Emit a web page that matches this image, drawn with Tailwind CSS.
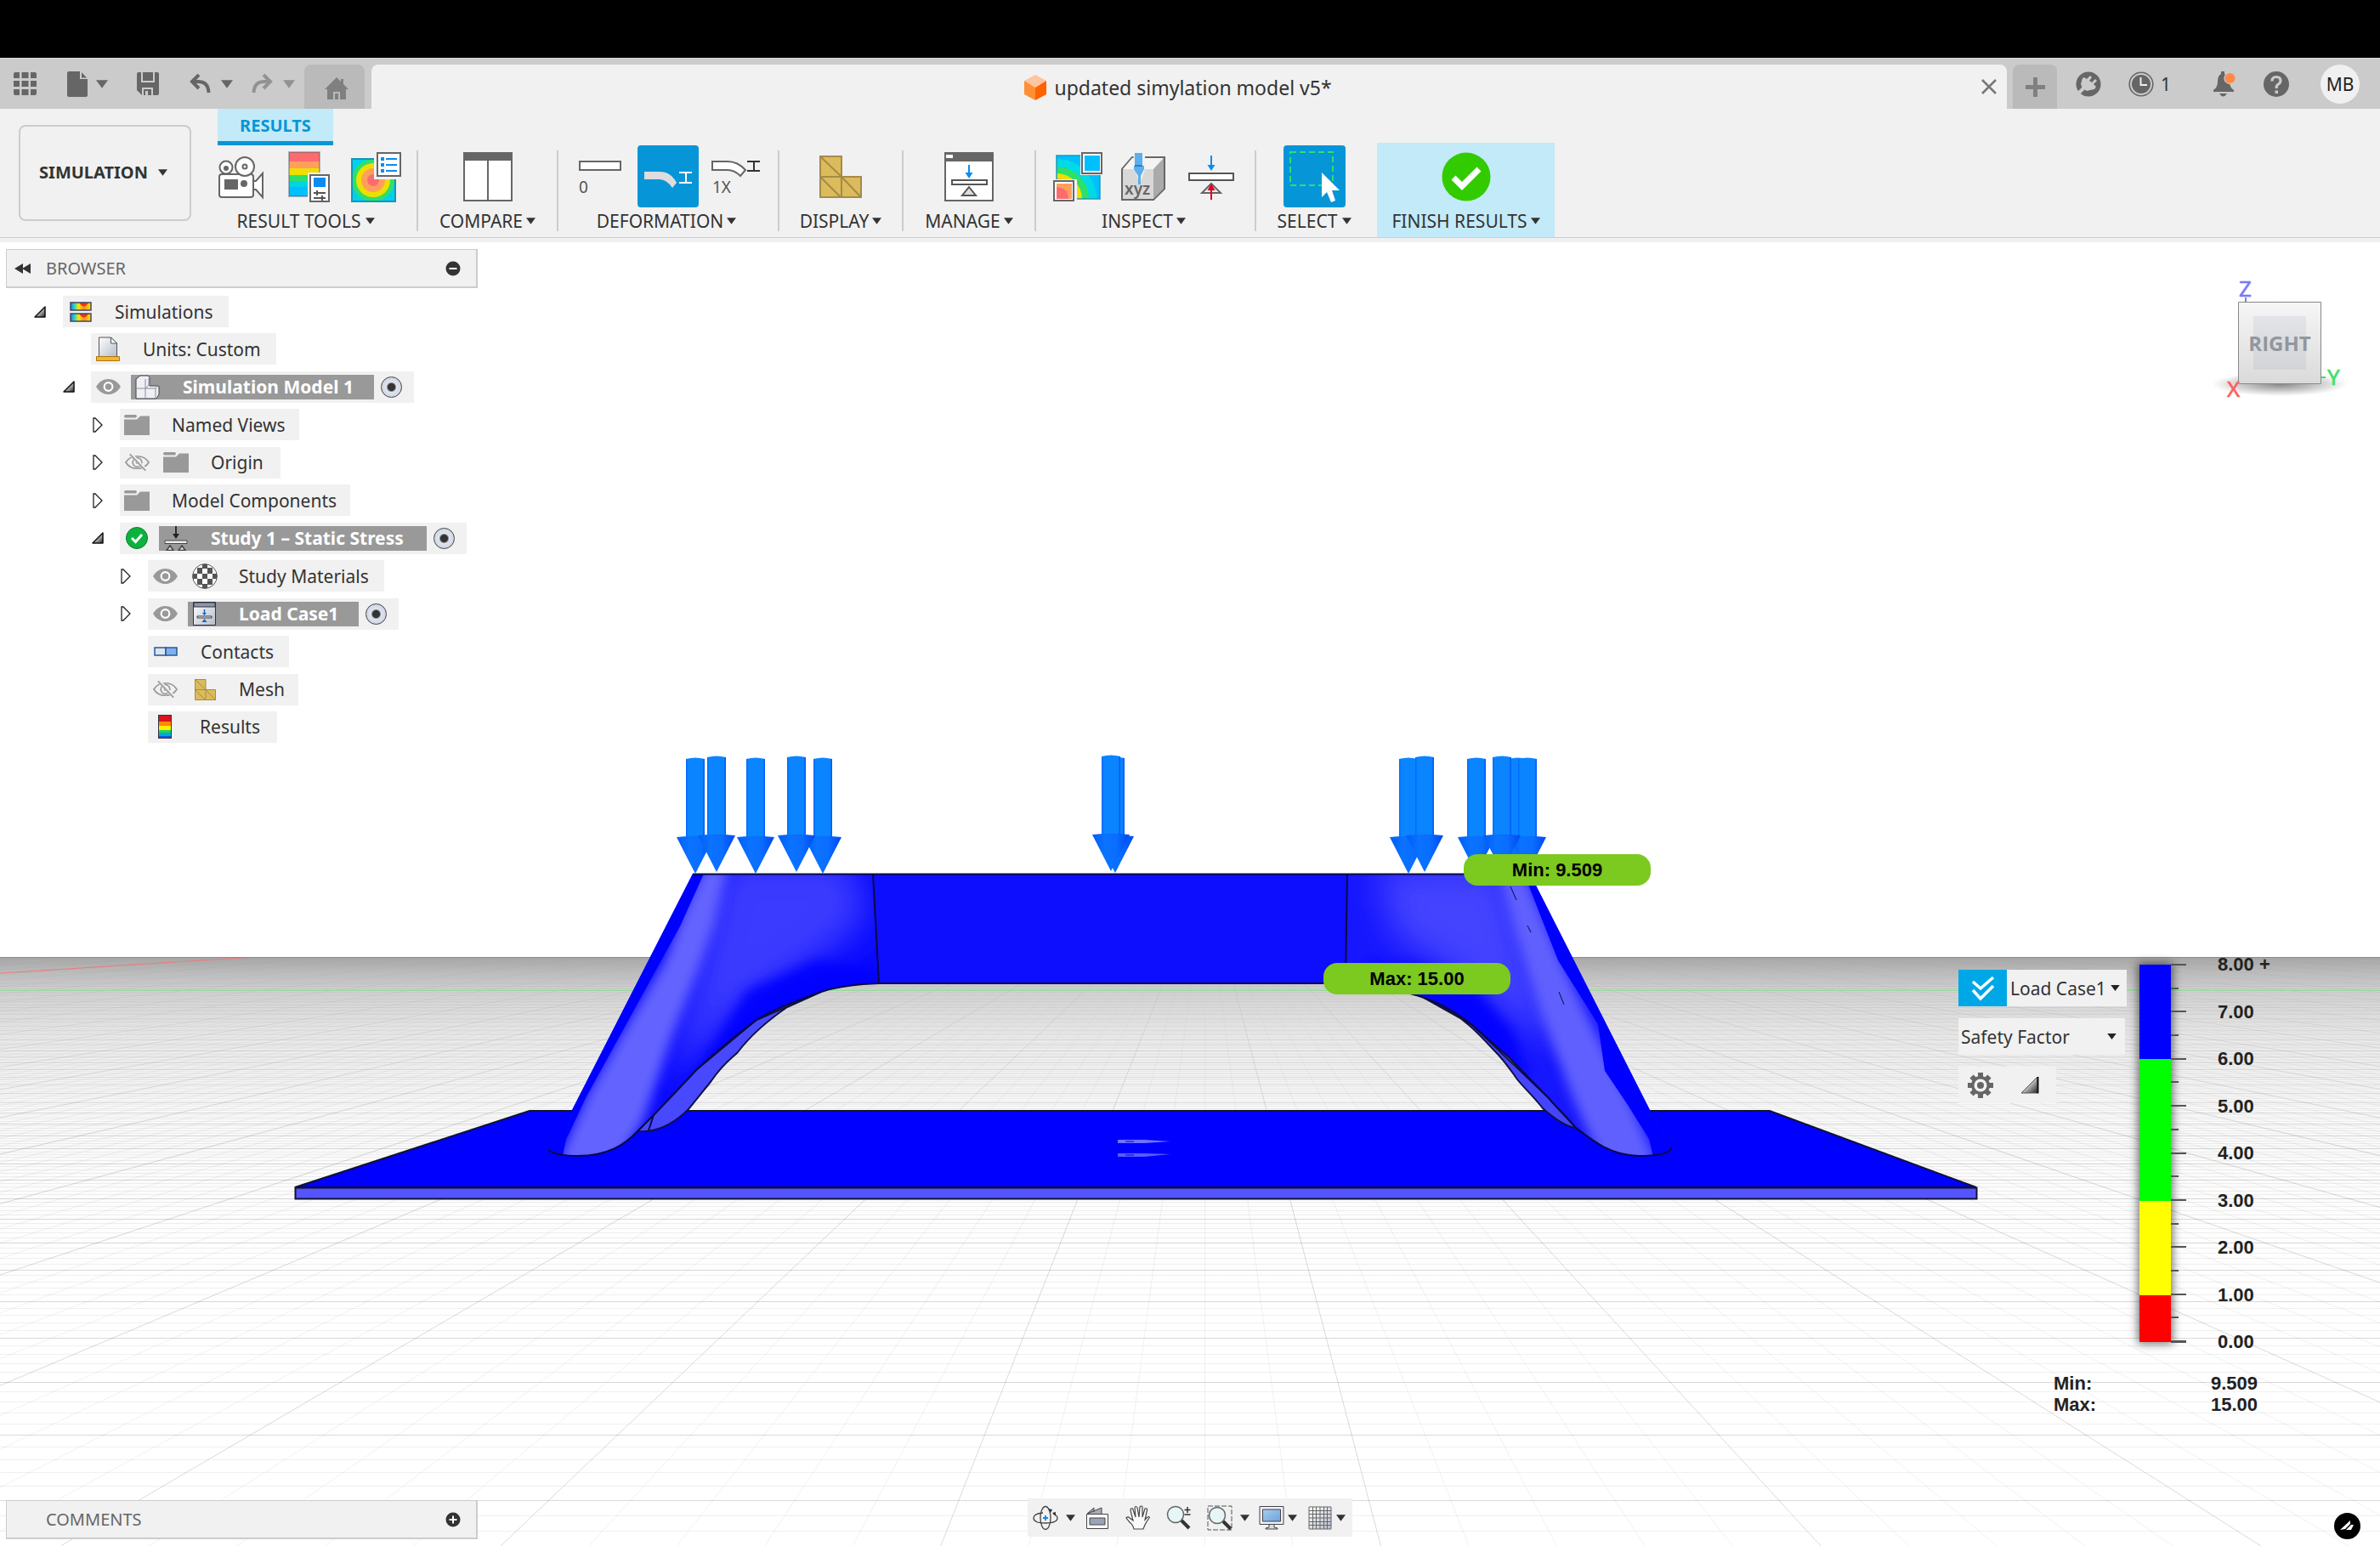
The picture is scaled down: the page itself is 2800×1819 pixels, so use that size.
<!DOCTYPE html>
<html lang="en">
<head>
<meta charset="utf-8">
<title>updated simylation model v5*</title>
<script src="https://cdn.jsdelivr.net/npm/@tailwindcss/browser@4"></script>
</head>
<body class="bg-white">
<svg class="absolute h-0 w-0" aria-hidden="true">
  <defs>
    <linearGradient id="tri" x1="0" y1="0" x2="1" y2="1"><stop offset=".3" stop-color="#fff"/><stop offset="1" stop-color="#222"/></linearGradient>
    <linearGradient id="paper" x1="0" y1="0" x2="1" y2="1"><stop offset="0" stop-color="#fff"/><stop offset="1" stop-color="#b4bccb"/></linearGradient>
    <linearGradient id="heat" x1="0" x2="1"><stop offset="0" stop-color="#1e7be0"/><stop offset=".2" stop-color="#2fd6c8"/><stop offset=".4" stop-color="#ffe600"/><stop offset=".65" stop-color="#f5901e"/><stop offset="1" stop-color="#ffe600"/></linearGradient>
    <linearGradient id="screen" x1="0" y1="0" x2="1" y2="1"><stop offset="0" stop-color="#a8cbee"/><stop offset="1" stop-color="#6ea3dc"/></linearGradient>
  </defs>
  <symbol id="caret" viewBox="0 0 12 8"><path d="M0 0h12L6 8z" fill="currentColor"/></symbol>
  <symbol id="open" viewBox="0 0 14 14"><path d="M13 1v12H1z" fill="url(#tri)" stroke="#111" stroke-width="1.5" stroke-linejoin="round"/></symbol>
  <symbol id="closed" viewBox="0 0 12 18"><path d="M1 1h2l8 8-8 8H1z" fill="#fff" stroke="#222" stroke-width="1.3"/></symbol>
  <symbol id="eye" viewBox="0 0 30 20"><path d="M0 10C7-2.500 23-2.500 30 10 23 22.500 7 22.500 0 10z" fill="#999"/><circle cx="15" cy="10" r="5" fill="#999" stroke="#fff" stroke-width="2.200"/></symbol>
  <symbol id="eyeoff" viewBox="0 0 30 22"><path d="M1 11C7 1 23 1 29 11 23 21 7 21 1 11z" fill="none" stroke="#999" stroke-width="1.800"/><circle cx="15" cy="11" r="5.500" fill="none" stroke="#999" stroke-width="1.800"/><circle cx="15" cy="11" r="2" fill="#999"/><path d="M8 2l17 18" stroke="#f0f0f0" stroke-width="4"/><path d="M6 1l19 20" stroke="#999" stroke-width="1.800"/></symbol>
  <symbol id="folder" viewBox="0 0 30 24"><path d="M2 0h11q2 0 2 2l-1 1.500H2Q0 3.500 0 2 0 0 2 0z" fill="#999"/><path d="M0 5.500h15L19 1.500h11V24H0z" fill="#999"/></symbol>
  <symbol id="mesh" viewBox="0 0 50 50"><path d="M1 1h25v24h23v24H1z" fill="#dcbb5c" stroke="#a68b47" stroke-width="2"/><path d="M1 25h25v24M1 25l24 24M26 25l23 24M1 1l25 24" fill="none" stroke="#a68b47" stroke-width="2"/></symbol>
</svg>

<div class="flex min-h-screen flex-col font-['Noto_Sans',sans-serif] text-[21px] leading-[28px] text-[#333]">
  <div class="h-[68px] shrink-0 bg-black"></div>

  <header class="flex h-[60px] shrink-0 items-end border-t border-[#ddd] bg-[#cbcbcb] text-[#666]">
    <div class="flex h-full w-[358px] items-center pl-4">
      <button aria-label="Data panel" class="mr-9"><svg class="h-[27px] w-[27px]" viewBox="0 0 27 27" fill="currentColor"><path d="M2 0h5v7H0V2Q0 0 2 0zM9.500 0h8v7h-8zM20 0h5q2 0 2 2v5h-7zM0 10h7v7H0zM9.500 10h8v7h-8zM20 10h7v7h-7zM0 20h7v7H2q-2 0-2-2zM9.500 20h8v7h-8zM20 20h7v5q0 2-2 2h-5z"/></svg></button>
      <button aria-label="File" class="mr-[34px] flex items-center gap-[10px]"><svg class="h-[30px] w-6" viewBox="0 0 24 30" fill="currentColor"><path d="M2 0h13v9h9v19q0 2-2 2H2q-2 0-2-2V2Q0 0 2 0z"/><path d="M17 1l6 6.500h-6z"/></svg><svg class="h-[10px] w-[14px]"><use href="#caret"/></svg></button>
      <button aria-label="Save" class="mr-9"><svg class="h-[27px] w-[26px]" viewBox="0 0 26 27"><path d="M2 0h22q2 0 2 2v23q0 2-2 2H6L0 21V2Q0 0 2 0z" fill="currentColor"/><path d="M6 0v11h14V0M7 27v-8h11v8" fill="none" stroke="#cbcbcb" stroke-width="2"/><path d="M10 22h3v5h-3z" fill="#cbcbcb"/></svg></button>
      <button aria-label="Undo" class="mr-[22px] flex items-center gap-3"><svg class="h-[23px] w-[25px]" viewBox="0 0 25 23" fill="none" stroke="currentColor" stroke-width="4"><path d="M11 1L3 9l8 8M3 9h7q12 0 12.500 13"/></svg><svg class="h-[10px] w-[14px]"><use href="#caret"/></svg></button>
      <button aria-label="Redo" class="flex items-center gap-3 text-[#929292]"><svg class="h-[23px] w-[25px]" viewBox="0 0 25 23" fill="none" stroke="currentColor" stroke-width="4"><path d="M14 1l8 8-8 8M22 9h-7Q3 9 2.500 22"/></svg><svg class="h-[10px] w-[14px]"><use href="#caret"/></svg></button>
    </div>
    <button aria-label="Home" class="mr-2 flex h-[52px] w-[71px] items-center justify-center rounded-t-lg bg-[#bababa] pt-1 pl-1"><svg class="h-[26px] w-7" viewBox="0 0 28 26" fill="#808080"><path d="M14 0l5 5V2h3v6l6 6h-3v12h-7v-9h-8v9H3V14H0z"/><path d="M12 19h4v7h-4z"/></svg></button>
    <div class="flex h-[52px] flex-1 items-center rounded-t-lg bg-[#f1f1f1]">
      <div class="flex flex-1 items-center justify-center gap-[9px] pt-[2px] pr-16 pl-[68px] text-[23px] text-[#333]">
        <svg class="h-[30px] w-[26px]" viewBox="0 0 26 30"><path d="M13 0l13 7-13 8L0 7z" fill="#ffc4a0"/><path d="M0 7l13 8v15L0 23z" fill="#ff8f33"/><path d="M26 7l-13 8v15l13-7z" fill="#ff6200"/></svg>
        <h1>updated simylation model v5*</h1>
      </div>
      <button aria-label="Close document" class="mr-3"><svg class="h-[18px] w-[18px]" viewBox="0 0 18 18" stroke="#777" stroke-width="2.500"><path d="M1 1l16 16M17 1L1 17"/></svg></button>
    </div>
    <button aria-label="New document" class="ml-[7px] flex h-[52px] w-[52px] items-center justify-center rounded-t-lg bg-[#bababa]"><svg class="h-[23px] w-[23px]" viewBox="0 0 23 23" fill="#808080"><path d="M9 0h5v9h9v5h-9v9H9v-9H0V9h9z"/></svg></button>
    <div class="flex h-full w-[380px] items-center pl-[22px]">
      <button aria-label="Extensions" class="mr-8"><svg class="h-[30px] w-[30px]" viewBox="0 0 30 30"><circle cx="15" cy="15" r="14.500" fill="currentColor"/><path d="M3 26l8-8" stroke="#cbcbcb" stroke-width="4"/><path d="M8 8l2-1 3 2 4-4 2 2-3 4 3 2 4-4 2 2-4 4 3 3-2 3-5 1-4 1-5-3-2-5z" fill="#cbcbcb"/></svg></button>
      <button aria-label="Job status" class="mr-[49px] flex items-center gap-2"><svg class="h-[30px] w-[30px]" viewBox="0 0 30 30"><circle cx="15" cy="15" r="13.800" fill="none" stroke="currentColor" stroke-width="1.600"/><circle cx="15" cy="15" r="11" fill="currentColor"/><path d="M14.500 7v9H22" fill="none" stroke="#eee" stroke-width="2"/></svg><span class="text-[21px] text-[#333]">1</span></button>
      <button aria-label="Notifications" class="mr-[33px]"><svg class="h-[30px] w-[27px]" viewBox="0 0 27 30"><path d="M10 0h4v3q6 2 6 9 0 7 5 10v2H1v-2q5-3 5-10 0-7 4-9z" fill="currentColor"/><path d="M8 26h9q-4.500 7-9 0z" fill="currentColor"/><circle cx="20.500" cy="8" r="7.200" fill="#cbcbcb"/><circle cx="20.500" cy="8" r="6" fill="#ff8a45"/></svg></button>
      <button aria-label="Help" class="mr-[37px]"><svg class="h-[30px] w-[30px]" viewBox="0 0 30 30"><circle cx="15" cy="15" r="15" fill="currentColor"/><path d="M10 11.500q0-5 5-5t5 4.500q0 2.500-2.500 4T15.200 19v1" fill="none" stroke="#cbcbcb" stroke-width="3.200"/><path d="M13.500 22.500h3.500V26h-3.500z" fill="#cbcbcb"/></svg></button>
      <button class="h-[46px] w-[46px] rounded-full bg-[#f0f0f0] text-[21px] text-[#222]">MB</button>
    </div>
  </header>

  <section class="flex h-[157px] shrink-0 flex-col bg-[#f1f1f1]">
    <div class="flex h-[151px]">
      <button class="mt-[19px] ml-[22px] flex h-[113px] w-[203px] items-center justify-center gap-3 rounded-lg border-2 border-[#ccc] pr-1 pb-[2px] text-[20px] font-bold">SIMULATION<svg class="h-2 w-[11px]"><use href="#caret"/></svg></button>
      <div class="ml-[11px] flex flex-col">
        <nav class="flex h-[43px] pl-5"><a href="#results" class="flex w-[136px] items-center justify-center border-b-[5px] border-[#0696d7] bg-[#c3eaf8] pt-[2px] text-[20px] font-bold text-[#0696d7]">RESULTS</a></nav>
        <div class="flex h-[108px] text-[21px]">
          <div class="flex w-[254px] flex-col items-center">
            <div class="flex h-[73px] w-[240px] items-center justify-around">
              <svg class="h-[60px] w-[60px]" viewBox="0 0 60 60" fill="#fff" stroke="#666" stroke-width="2"><path d="M45 35h3l8-9v28l-8-9h-3"/><rect x="5" y="27" width="40" height="27" rx="3"/><circle cx="13" cy="19" r="7.500"/><circle cx="35" cy="18" r="11"/><circle cx="13" cy="20" r="2" fill="#666"/><circle cx="35" cy="18" r="2.500" fill="none"/><path d="M12 34h14v10H12z" fill="#666"/><circle cx="34" cy="38" r="3" fill="#666"/></svg>
              <svg class="h-[60px] w-[60px]" viewBox="0 0 60 60"><path fill="#fd6b6e" d="M7 1h36v12H7z"/><path fill="#ff9f5c" d="M7 12h36v8H7z"/><path fill="#eddf00" d="M7 20h36v8H7z"/><path fill="#2de06a" d="M7 28h36v8H7z"/><path fill="#00d4e6" d="M7 35h36v8H7z"/><path fill="#00bfff" d="M7 42h36v11H7z"/><path d="M7 1h36v52H7z" fill="none" stroke="#456" stroke-opacity=".4" stroke-width="2"/><path d="M29 25h26v36H29z" fill="#f1f1f1"/><path d="M32 28h22v31H32z" fill="#fff" stroke="#666" stroke-width="2"/><path d="M36 31h14v11H36z" fill="#0a8cf0"/><path d="M36 49h14M36 55h14M40 46v6M46 52v6" stroke="#555" stroke-width="2"/></svg>
              <svg class="h-[60px] w-[60px]" viewBox="0 0 60 60"><path fill="#00d0f0" d="M1 9h51v50H1z"/><clipPath id="cp1"><path d="M1 9h51v50H1z"/></clipPath><g clip-path="url(#cp1)"><circle cx="26" cy="34" r="25" fill="#2de06a"/><circle cx="26" cy="34" r="20" fill="#eddf00"/><circle cx="26" cy="34" r="14" fill="#ff9f5c"/><circle cx="26" cy="34" r="7" fill="#fd6b6e"/></g><path d="M1 9h51v50H1z" fill="none" stroke="#1596b5" stroke-width="2"/><path d="M27 0h33v33H27z" fill="#f1f1f1"/><path d="M31 2h27v27H31z" fill="#fff" stroke="#666" stroke-width="2"/><path d="M35 7h4v4h-4zM35 14h4v4h-4zM35 21h4v4h-4zM41 8h13v2H41zM41 15h13v2H41zM41 22h13v2H41z" fill="#0a8cf0"/></svg>
            </div>
            <button class="flex h-8 items-center gap-[6px] pr-[6px]">RESULT TOOLS<svg class="h-2 w-[11px]"><use href="#caret"/></svg></button>
          </div>
          <div class="mt-[6px] h-[95px] w-[2px] bg-[#ccc]"></div>
          <div class="flex w-[163px] flex-col items-center">
            <div class="flex h-[73px] items-center"><svg class="h-[58px] w-[58px]" viewBox="0 0 58 58"><path d="M1 1h56v56H1z" fill="#fff" stroke="#666" stroke-width="2"/><path d="M0 0h58v10H0z" fill="#666"/><path d="M29 9v48" stroke="#666" stroke-width="2"/></svg></div>
            <button class="flex h-8 items-center gap-1">COMPARE<svg class="h-2 w-[11px]"><use href="#caret"/></svg></button>
          </div>
          <div class="mt-[6px] h-[95px] w-[2px] bg-[#ccc]"></div>
          <div class="flex w-[258px] flex-col items-center">
            <div class="flex h-[73px] items-center gap-2">
              <svg class="h-[60px] w-[72px]" viewBox="0 0 72 60"><path d="M12 12h48v10H12z" fill="#fff" stroke="#666" stroke-width="2"/><text x="11" y="49" font-family="Noto Sans" font-size="19" fill="#555">0</text></svg>
              <div class="flex h-[73px] w-[72px] items-center rounded-sm bg-[#0696d7]"><svg class="h-[60px] w-[72px]" viewBox="0 0 72 60"><path d="M8 24h18q13 0 20 13l-5 6Q34 33 26 33H8z" fill="#ddd"/><path d="M49 25h15M49 37h15M57 25v12" stroke="#fff" stroke-width="2"/></svg></div>
              <svg class="h-[60px] w-[72px]" viewBox="0 0 72 60"><path d="M8 12h18q12 0 21 10l-6 7Q34 22 26 22H8z" fill="#fff" stroke="#666" stroke-width="2"/><path d="M49 12h15M49 23h15M57 12v11" stroke="#333" stroke-width="2"/><text x="8" y="49" font-family="Noto Sans" font-size="19" fill="#555">1X</text></svg>
            </div>
            <button class="flex h-8 items-center gap-1 pr-1">DEFORMATION<svg class="h-2 w-[11px]"><use href="#caret"/></svg></button>
          </div>
          <div class="mt-[6px] h-[95px] w-[2px] bg-[#ccc]"></div>
          <div class="flex w-[144px] flex-col items-center">
            <div class="flex h-[73px] items-center"><svg class="h-[50px] w-[50px]"><use href="#mesh"/></svg></div>
            <button class="flex h-8 items-center gap-1">DISPLAY<svg class="h-2 w-[11px]"><use href="#caret"/></svg></button>
          </div>
          <div class="mt-[6px] h-[95px] w-[2px] bg-[#ccc]"></div>
          <div class="flex w-[154px] flex-col items-center">
            <div class="flex h-[73px] items-center"><svg class="h-[58px] w-[58px]" viewBox="0 0 58 58"><path d="M1 1h56v56H1z" fill="#fff" stroke="#666" stroke-width="2"/><path d="M0 0h58v11H0z" fill="#666"/><path d="M2 3h8v4H2z" fill="#fff"/><path d="M29 15v12" stroke="#0a8cf0" stroke-width="2"/><path d="M24.500 24h9L29 31z" fill="#0a8cf0"/><path d="M9 33h41v5H9z" fill="#fff" stroke="#555" stroke-width="2"/><path d="M29 41l8 10H21z" fill="#ddd" stroke="#555" stroke-width="2"/></svg></div>
            <button class="flex h-8 items-center gap-1">MANAGE<svg class="h-2 w-[11px]"><use href="#caret"/></svg></button>
          </div>
          <div class="mt-[6px] h-[95px] w-[2px] bg-[#ccc]"></div>
          <div class="flex w-[257px] flex-col items-center pr-1">
            <div class="flex h-[73px] items-center gap-[18px]">
              <svg class="h-[60px] w-[60px]" viewBox="0 0 60 60"><clipPath id="cp2"><path d="M5 5h51v51H5z"/></clipPath><g clip-path="url(#cp2)"><path fill="#00bfff" d="M5 5h51v51H5z"/><circle cx="5" cy="56" r="47" fill="#00d9e6"/><circle cx="5" cy="56" r="38" fill="#2de06a"/><circle cx="5" cy="56" r="30" fill="#eddf00"/><circle cx="5" cy="56" r="24" fill="#ff9f5c"/></g><path d="M5 5h51v51H5z" fill="none" stroke="#1596b5" stroke-opacity=".7" stroke-width="2"/><path d="M33 0h27v28H33zM0 33h29v27H0z" fill="#f1f1f1"/><path d="M35 2h23v24H35zM2 35h23v23H2z" fill="#fff" stroke="#666" stroke-width="2"/><path d="M38 5h18v18H38z" fill="#00bfff"/><path d="M5 38h18v18H5z" fill="#ff9f5c"/><path d="M5 42q14 1 14 14H5z" fill="#fd6b6e"/></svg>
              <svg class="h-[60px] w-[60px]" viewBox="0 0 60 60"><path d="M4 21L16 7h38v37L41 57H4z" fill="#d8d8d8" stroke="#666" stroke-width="2"/><path d="M5 21L16 8h37L41 21z" fill="#f4f4f4"/><path d="M53 8v36L41 56V21z" fill="#aaa"/><path d="M17 1h14v20l-6 18-6-18z" fill="#f1f1f1"/><path d="M19 2h9v15h2v4l-4 8v10h-3V29l-5-8v-4h1z" fill="#5aafec"/><path d="M19 17h9" stroke="#2b7fc2" stroke-width="2"/><text x="7" y="51" font-family="Noto Sans" font-size="19" font-weight="600" fill="#666">xyz</text></svg>
              <svg class="h-[60px] w-[60px]" viewBox="0 0 60 60"><path d="M31 5v12" stroke="#0a8cf0" stroke-width="2"/><path d="M26.500 16h9L31 23z" fill="#0a8cf0"/><path d="M5 26h52v8H5z" fill="#fff" stroke="#555" stroke-width="2"/><path d="M31 38l11 11H20z" fill="#eee" stroke="#666" stroke-width="2"/><path d="M31 57V44" stroke="#e00020" stroke-width="2"/><path d="M26.500 46h9L31 38z" fill="#e00020"/></svg>
            </div>
            <button class="flex h-8 items-center gap-1">INSPECT<svg class="h-2 w-[11px]"><use href="#caret"/></svg></button>
          </div>
          <div class="mt-[6px] h-[95px] w-[2px] bg-[#ccc]"></div>
          <div class="flex w-[137px] flex-col items-center">
            <div class="flex h-[73px] w-[73px] rounded-sm bg-[#0696d7]"><svg viewBox="0 0 73 73"><path d="M8 8h50v39H8z" fill="none" stroke="#2de06a" stroke-width="2" stroke-dasharray="7 4"/><path d="M45 32v29l6-6 5 12 5-2-4-12h9z" fill="#fff"/></svg></div>
            <button class="flex h-8 items-center gap-[6px]">SELECT<svg class="h-2 w-[11px]"><use href="#caret"/></svg></button>
          </div>
          <div class="mt-[-3px] ml-[5px] flex w-[209px] flex-col items-center bg-[#c3eaf8] pt-[3px]">
            <div class="flex h-[73px] items-center"><svg class="h-[58px] w-[58px]" viewBox="0 0 58 58"><circle cx="29" cy="29" r="28.500" fill="#32cb00"/><path d="M14 30l10 10 20-20" fill="none" stroke="#fff" stroke-width="7"/></svg></div>
            <button class="flex h-8 items-center gap-1">FINISH RESULTS<svg class="h-2 w-[11px]"><use href="#caret"/></svg></button>
          </div>
        </div>
      </div>
    </div>
    <div class="h-[6px] border-t border-[#ccc]"></div>
  </section>

  <main class="relative flex min-h-[1534px] flex-1 flex-col overflow-hidden">
    <svg class="absolute inset-0 h-full w-full" viewBox="0 285 2800 1534" preserveAspectRatio="xMidYMin slice">
      <defs>
        <linearGradient id="ground" gradientUnits="userSpaceOnUse" x1="0" y1="1126" x2="0" y2="1560">
          <stop offset="0" stop-color="#b0b0b0"/><stop offset=".05" stop-color="#cacaca"/><stop offset=".1" stop-color="#dadada"/><stop offset=".2" stop-color="#ececec"/><stop offset=".4" stop-color="#f8f8f8"/><stop offset=".7" stop-color="#fdfdfd"/><stop offset="1" stop-color="#fff"/>
        </linearGradient>
        <linearGradient id="fade" gradientUnits="userSpaceOnUse" x1="0" y1="1126" x2="0" y2="1350"><stop offset="0" stop-color="#333"/><stop offset="1" stop-color="#fff"/></linearGradient>
        <mask id="far" maskUnits="userSpaceOnUse" x="0" y="1100" width="2800" height="720"><path d="M0 1126h2800v700H0z" fill="url(#fade)"/></mask>
        <clipPath id="below"><path d="M0 1126h2800v700H0z"/></clipPath>
        <linearGradient id="shaft" x1="0" x2="1"><stop offset="0" stop-color="#0066ff"/><stop offset=".12" stop-color="#0a85ff"/><stop offset=".88" stop-color="#0a85ff"/><stop offset="1" stop-color="#0050ff"/></linearGradient>
        <linearGradient id="head" x1="0" x2="1"><stop offset="0" stop-color="#005cf8"/><stop offset=".35" stop-color="#0a73ff"/><stop offset=".65" stop-color="#0a6dff"/><stop offset="1" stop-color="#0048f0"/></linearGradient>
        <filter id="soft" x="-30%" y="-30%" width="160%" height="160%"><feGaussianBlur stdDeviation="7"/></filter>
        <filter id="softer" x="-30%" y="-30%" width="160%" height="160%"><feGaussianBlur stdDeviation="20"/></filter>
        <clipPath id="legL"><path d="M815 1028H1027L1034 1157C1004 1158 985 1161 966 1167C936 1178 912 1187 890 1200C860 1222 840 1240 819 1259C800 1280 786 1294 769 1312L750 1331C735 1347 715 1360 680 1360H662L673 1306z"/></clipPath>
        <clipPath id="legR"><path d="M1585 1028H1800L1941 1306L1966 1350C1967 1357 1950 1360 1927 1360C1895 1359 1876 1344 1854 1327C1845 1316 1833 1305 1822 1292L1776 1245L1732 1206C1710 1189 1690 1177 1659 1169C1635 1160 1610 1157 1583 1157z"/></clipPath>
        <g id="arrow"><path d="M-11 2q11-3 22 0v95h-22z" fill="url(#shaft)"/><path d="M-22 94q22-3 44 0L0 137z" fill="url(#head)"/></g>
        <radialGradient id="cubeshadow"><stop offset="0" stop-color="#888"/><stop offset="1" stop-color="#888" stop-opacity="0"/></radialGradient>
        <linearGradient id="cubeface" x1="0" y1="0" x2="0" y2="1"><stop offset="0" stop-color="#f6f6f6"/><stop offset="1" stop-color="#dadada"/></linearGradient>
        <linearGradient id="cubemid" x1="0" y1="0" x2="0" y2="1"><stop offset="0" stop-color="#e2e4e8"/><stop offset="1" stop-color="#d2d4d7"/></linearGradient>
      </defs>
      <path d="M0 1126h2800v693H0z" fill="url(#ground)"/>
      <g clip-path="url(#below)" fill="none" stroke="#000">
        <g mask="url(#far)"><path id="minor" stroke-opacity=".06"/><path id="major" stroke-opacity=".15"/></g>
        <path d="M0 1145L300 1126" stroke="#f07878"/>
        <path d="M0 1165.500H2800" stroke="#8fdc98"/>
        <path d="M0 1126.500H2800" stroke="#888"/>
      </g>
      <!-- base plate -->
      <path d="M623 1307H2082L2325 1397H347z" fill="#00f" stroke="#111133" stroke-width="2"/>
      <path d="M347.500 1397.500h1978V1410.500h-1978z" fill="#5555ff" stroke="#111133" stroke-width="2"/>
      <g fill="#7272ff"><path d="M1315 1341h31l31 2-31 2h-31z"/><path d="M1315 1357h31l31 1-31 3h-31z" opacity=".8"/></g>
      <path d="M1324 1343h10M1324 1359h10" stroke="#00f"/>
      <!-- span -->
      <path d="M1027 1028H1586L1583 1157H1034z" fill="#0e0eff"/>
      <!-- inner faces of the legs -->
      <path d="M750 1331C775 1333 795 1320 810 1305C825 1287 830 1280 836 1273C850 1252 860 1246 868 1238C880 1222 900 1203 926 1185L966 1167L890 1200L819 1259z" fill="#4848ff" stroke="#111144" stroke-width="2"/>
      <path d="M1854 1327C1840 1325 1826 1314 1815 1304C1805 1291 1793 1280 1785 1270C1770 1248 1762 1240 1757 1235C1745 1222 1735 1212 1728 1206C1710 1190 1690 1180 1675 1174L1732 1206L1822 1292z" fill="#4444ff" stroke="#111144" stroke-width="2"/>
      <g clip-path="url(#legL)">
        <path d="M600 1000h500v400H600z" fill="#0b0bff"/>
        <path d="M850 1010h150l20 70-60 50-80 50-90 90z" fill="#4545ff" filter="url(#softer)" opacity=".85"/>
        <path d="M1034 1140L960 1130 880 1165 800 1290 850 1290 920 1200 1040 1170z" fill="#00f" filter="url(#soft)" opacity=".9"/>
        <path d="M828 1020L805 1070 782 1130 735 1210 690 1290 655 1370H725L756 1320 790 1220 822 1140 840 1090 856 1020z" fill="#6464ff" filter="url(#soft)"/>
        <path d="M815 1028L673 1306 655 1345V1000h160z" fill="#00f"/>
        <path d="M815 1028L673 1306 664 1345 690 1290 800 1090 828 1028z" fill="#00f"/>
      </g>
      <g clip-path="url(#legR)">
        <path d="M1550 1000h450v400h-450z" fill="#1717ff"/>
        <path d="M1620 1020h150l30 120 40 90-40-20-80-60-80-50z" fill="#4747ff" filter="url(#softer)" opacity=".95"/>
        <path d="M1590 1135l80 0 60 20 50 60 20 60-80-70-70-40z" fill="#00f" filter="url(#soft)" opacity=".9"/>
        <path d="M1762 1020L1780 1090 1812 1190 1850 1290 1885 1370H1950L1915 1290 1870 1200 1832 1120 1790 1020z" fill="#6060ff" filter="url(#soft)"/>
        <path d="M1793 1028L1833 1130 1880 1205 1888 1260 1915 1300 1940 1340 1946 1365H1980V1300L1800 1020z" fill="#00f"/>
      </g>
      <g fill="none" stroke="#0a0a44" stroke-width="2">
        <path d="M815 1028.500H1800M1027 1028L1034 1157H1583L1585 1028"/>
        <path d="M1034 1157C1004 1158 985 1161 966 1167C936 1178 912 1187 890 1200C860 1222 840 1240 819 1259C800 1280 786 1294 769 1312L750 1331C735 1347 715 1360 680 1360Q655 1360 645 1353M769 1312l-6 18"/>
        <path d="M1966 1350C1967 1357 1950 1360 1927 1360C1895 1359 1876 1344 1854 1327C1845 1316 1833 1305 1822 1292L1776 1245L1732 1206C1710 1189 1690 1177 1659 1169C1635 1160 1610 1157 1583 1157"/>
        <path d="M1777 1043l7 16M1797 1089l4 8M1834 1167l6 15" stroke-width="1"/>
      </g>
      <use href="#arrow" x="818" y="891"/><use href="#arrow" x="843" y="889"/><use href="#arrow" x="889" y="891"/><use href="#arrow" x="968" y="891"/><use href="#arrow" x="937" y="889"/>
      <use href="#arrow" x="1312" y="890"/><use href="#arrow" x="1307" y="888"/>
      <use href="#arrow" x="1657" y="891"/><use href="#arrow" x="1676" y="889"/>
      <use href="#arrow" x="1737" y="891"/><use href="#arrow" x="1786" y="891"/><use href="#arrow" x="1797" y="891"/><use href="#arrow" x="1767" y="889"/>
      <!-- view cube -->
      <ellipse cx="2682" cy="452" rx="80" ry="14" fill="url(#cubeshadow)"/>
      <path d="M2642 350v5" stroke="#7a7af5" stroke-width="2"/><path d="M2731 444h5" stroke="#3ee06a" stroke-width="2"/>
      <path d="M2633.500 355.500h97v96h-97z" fill="url(#cubeface)" stroke="#888"/>
      <path d="M2651 372h62v63h-62z" fill="url(#cubemid)"/>
      <g font-family="Noto Sans" font-size="26" stroke-width=".6"><text x="2682" y="413" text-anchor="middle" font-size="24" font-weight="700" font-family="Open Sans" fill="#92979d">RIGHT</text><text x="2634" y="349" fill="#7a7af5" stroke="#7a7af5">Z</text><text x="2620" y="467" fill="#fb6060" stroke="#fb6060">X</text><text x="2738" y="453" fill="#3ee06a" stroke="#3ee06a">Y</text></g>
    </svg>

    <div class="absolute top-[720px] left-[1722px] flex h-[37px] w-[220px] items-center justify-center rounded-[16px] bg-[#7cc91f] font-['Liberation_Sans',sans-serif] text-[22px] font-bold text-black">Min: 9.509</div>
    <div class="absolute top-[848px] left-[1557px] flex h-[37px] w-[220px] items-center justify-center rounded-[16px] bg-[#7cc91f] font-['Liberation_Sans',sans-serif] text-[22px] font-bold text-black">Max: 15.00</div>

    <aside class="relative ml-[7px] w-[555px] pt-2">
      <div class="flex h-[46px] items-center border border-r-2 border-b-2 border-[#ccc] bg-[#f1f1f1] pr-[18px] pl-[9px] text-[20px] text-[#666]">
        <button aria-label="Collapse" class="mr-[17px]"><svg class="h-3 w-5" viewBox="0 0 20 12" fill="#333"><path d="M10 0v12L0 6zM19 0v12L9 6z"/></svg></button>
        <h2 class="flex-1">BROWSER</h2>
        <button aria-label="Minimise"><svg class="h-[18px] w-[18px]" viewBox="0 0 18 18"><circle cx="9" cy="9" r="8.500" fill="#333"/><path d="M4.500 9h9" stroke="#fff" stroke-width="2"/></svg></button>
      </div>
      <ul class="mt-[9px] flex h-[526px] flex-col justify-between">
        <li class="flex h-[37px] items-center pl-[33px]"><button aria-label="Collapse" class="flex w-[34px]"><svg class="h-[14px] w-[14px]"><use href="#open"/></svg></button><div class="flex h-full items-center bg-[#f1f1f1] pr-[18px] pl-2"><svg class="mr-[27px] h-[26px] w-[26px]" viewBox="0 0 26 26"><path d="M1 2h24v9H1zM1 15h24v9H1z" fill="url(#heat)"/><path d="M11 2h11q-5 9-11 0zM11 15h11q-5 9-11 0z" fill="#e32"/><path d="M1 2h24v9H1zM1 15h24v9H1z" fill="none" stroke="#446" stroke-width="1.500"/></svg>Simulations</div></li>
        <li class="flex h-[37px] items-center pl-[100px]"><div class="flex h-full items-center bg-[#f1f1f1] pr-[18px] pl-[6px]"><svg class="mr-[27px] h-[30px] w-7" viewBox="0 0 28 30"><path d="M3.500 1h14l7 7v16h-21z" fill="url(#paper)" stroke="#555"/><path d="M17.500 1v7h7z" fill="#fff" stroke="#555"/><path d="M.5 23.500h27v5H.5z" fill="#f5b62e" stroke="#a87512"/></svg>Units: Custom</div></li>
        <li class="flex h-[37px] items-center pl-[67px]"><button aria-label="Collapse" class="flex w-[33px]"><svg class="h-[14px] w-[14px]"><use href="#open"/></svg></button><div class="flex h-full items-center bg-[#f1f1f1] pr-[14px] pl-[6px]"><button aria-label="Visible"><svg class="h-5 w-[29px]"><use href="#eye"/></svg></button><div class="mr-2 ml-3 flex h-[29px] items-center bg-[#999] pr-6 pl-[5px] font-bold text-white"><svg class="mr-[27px] h-[29px] w-[29px]" viewBox="0 0 29 29" fill="#eef0f5" stroke="#444" stroke-width="1"><path d="M1 5l5-4h9l2 2v10H28v10l-3 5H1z"/><path d="M1 16h11v12M12 16l4-4v-8M12 16h12v12M24 16l4-4M12 16V5" fill="none" stroke="#8a8f9c"/></svg>Simulation Model 1</div><input type="radio" name="model" checked aria-label="Activate Simulation Model 1" class="h-[25px] w-[25px] appearance-none rounded-full border border-[#444] bg-[radial-gradient(circle,#333_4px,#dfe4ee_6px,#c2cbdc)]"></div></li>
        <li class="flex h-[37px] items-center pl-[102px]"><button aria-label="Expand" class="flex w-8"><svg class="h-[18px] w-3"><use href="#closed"/></svg></button><div class="flex h-full items-center bg-[#f1f1f1] pr-4 pl-[5px]"><svg class="mr-[26px] h-6 w-[30px]"><use href="#folder"/></svg>Named Views</div></li>
        <li class="flex h-[37px] items-center pl-[102px]"><button aria-label="Expand" class="flex w-8"><svg class="h-[18px] w-3"><use href="#closed"/></svg></button><div class="flex h-full items-center bg-[#f1f1f1] pr-[20px] pl-[6px]"><button aria-label="Hidden"><svg class="mr-4 h-[22px] w-[29px]"><use href="#eyeoff"/></svg></button><svg class="mr-[26px] h-6 w-[30px]"><use href="#folder"/></svg>Origin</div></li>
        <li class="flex h-[37px] items-center pl-[102px]"><button aria-label="Expand" class="flex w-8"><svg class="h-[18px] w-3"><use href="#closed"/></svg></button><div class="flex h-full items-center bg-[#f1f1f1] pr-4 pl-[5px]"><svg class="mr-[26px] h-6 w-[30px]"><use href="#folder"/></svg>Model Components</div></li>
        <li class="flex h-[37px] items-center pl-[101px]"><button aria-label="Collapse" class="flex w-[33px]"><svg class="h-[14px] w-[14px]"><use href="#open"/></svg></button><div class="flex h-full items-center bg-[#f1f1f1] pr-[14px] pl-[7px]"><svg class="h-[26px] w-[26px]" viewBox="0 0 26 26"><circle cx="13" cy="13" r="12.500" fill="#0bb33c" stroke="#087c2a"/><path d="M7 13l4.500 4.500L19 9" fill="none" stroke="#fff" stroke-width="3"/></svg><div class="mr-2 ml-[13px] flex h-[29px] items-center bg-[#999] pr-[27px] pl-[6px] font-bold text-white"><svg class="mr-[27px] h-[29px] w-7" viewBox="0 0 28 29"><path d="M14 0v12" stroke="#222" stroke-width="1.800"/><path d="M10 9h8l-4 6z" fill="#222"/><path d="M1 17h26v3.500H1z" fill="#eee" stroke="#444"/><path d="M7 23l4 5.500H3zM21 23l4 5.500h-8z" fill="#ddd" stroke="#444" stroke-width="1.500"/></svg>Study 1 – Static Stress</div><input type="radio" name="study" checked aria-label="Activate Study 1" class="h-[25px] w-[25px] appearance-none rounded-full border border-[#444] bg-[radial-gradient(circle,#333_4px,#dfe4ee_6px,#c2cbdc)]"></div></li>
        <li class="flex h-[37px] items-center pl-[135px]"><button aria-label="Expand" class="flex w-8"><svg class="h-[18px] w-3"><use href="#closed"/></svg></button><div class="flex h-full items-center bg-[#f1f1f1] pr-[18px] pl-[6px]"><button aria-label="Visible"><svg class="mr-[17px] h-5 w-[29px]"><use href="#eye"/></svg></button><svg class="mr-[25px] h-[30px] w-[30px]" viewBox="0 0 30 30"><clipPath id="ball"><circle cx="15" cy="15" r="14.500"/></clipPath><g clip-path="url(#ball)"><path d="M0 0h30v30H0z" fill="#fff"/><path d="M12 0h6v6h-6zM6 5h6v7H6zM18 5h6v7h-6zM0 12h6v6H0zM12 12h6v6h-6zM24 12h6v6h-6zM6 18h6v7H6zM18 18h6v7h-6zM12 24h6v6h-6z" fill="#555"/></g><circle cx="15" cy="15" r="14.300" fill="none" stroke="#555"/></svg>Study Materials</div></li>
        <li class="flex h-[37px] items-center pl-[135px]"><button aria-label="Expand" class="flex w-8"><svg class="h-[18px] w-3"><use href="#closed"/></svg></button><div class="flex h-full items-center bg-[#f1f1f1] pr-[14px] pl-[6px]"><button aria-label="Visible"><svg class="h-5 w-[29px]"><use href="#eye"/></svg></button><div class="mr-2 ml-3 flex h-[29px] items-center bg-[#999] pr-[24px] pl-[6px] font-bold text-white"><svg class="mr-[27px] h-7 w-[27px]" viewBox="0 0 27 28"><path d="M.5.5h26v27H.5z" fill="url(#paper)" stroke="#334"/><path d="M1 1h25v5H1z" fill="#8e98a5" stroke="#334"/><path d="M13.500 9v5" stroke="#1565c0" stroke-width="1.500"/><path d="M11 13h5l-2.500 3zM13.500 20l3 4h-6z" fill="#1565c0"/><path d="M5 17h17v2H5z" fill="#fff" stroke="#333"/></svg>Load Case1</div><input type="radio" name="loadcase" checked aria-label="Activate Load Case1" class="h-[25px] w-[25px] appearance-none rounded-full border border-[#444] bg-[radial-gradient(circle,#333_4px,#dfe4ee_6px,#c2cbdc)]"></div></li>
        <li class="flex h-[37px] items-center pl-[167px]"><div class="flex h-full items-center bg-[#f1f1f1] pr-[18px] pl-[7px]"><svg class="mr-[27px] h-3 w-7" viewBox="0 0 28 12"><path d="M1 1h13v9H1z" fill="#dce4ee" stroke="#225a9c" stroke-width="1.500"/><path d="M14 1h13v9H14z" fill="#7fb2ec" stroke="#225a9c" stroke-width="1.500"/></svg>Contacts</div></li>
        <li class="flex h-[37px] items-center pl-[167px]"><div class="flex h-full items-center bg-[#f1f1f1] pr-4 pl-[6px]"><button aria-label="Hidden"><svg class="mr-5 h-[22px] w-[29px]"><use href="#eyeoff"/></svg></button><svg class="mr-[27px] h-[25px] w-[25px]"><use href="#mesh"/></svg>Mesh</div></li>
        <li class="flex h-[37px] items-center pl-[167px]"><div class="flex h-full items-center bg-[#f1f1f1] pr-[20px] pl-3"><svg class="mr-[33px] h-7 w-4" viewBox="0 0 16 28"><path fill="#d9121c" d="M0 0h16v8H0z"/><path fill="#f80" d="M0 8h16v6H0z"/><path fill="#fe0" d="M0 13h16v5H0z"/><path fill="#1fd655" d="M0 18h16v4H0z"/><path fill="#0ad" d="M0 21h16v4H0z"/><path fill="#15d" d="M0 25h16v3H0z"/><path d="M.5.5h15v27H.5z" fill="none" stroke="#334"/></svg>Results</div></li>
      </ul>
    </aside>

    <section class="absolute top-[837px] right-[128px] w-[368px] text-[#222]">
      <div class="flex">
        <div class="mt-[19px] flex flex-1 flex-col items-start gap-[14px]">
          <div class="flex h-[43px] w-[198px]">
            <button aria-label="Show results" class="flex w-[57px] items-center justify-center bg-[#00a7e6]"><svg class="h-[30px] w-[28px]" viewBox="0 0 28 30" fill="none" stroke="#fff" stroke-width="3.500"><path d="M2 7l9 8L26 2M2 17l9 10 15-15"/></svg></button>
            <div class="relative flex-1"><select aria-label="Load case" class="h-full w-full appearance-none bg-[#f1f1f1] pl-1 text-[#333]"><option>Load Case1</option></select><svg class="pointer-events-none absolute top-[18px] right-2 h-[7px] w-[11px]"><use href="#caret"/></svg></div>
          </div>
          <div class="relative h-[43px] w-[196px]"><select aria-label="Result type" class="h-full w-full appearance-none bg-[#f1f1f1] pl-[3px] text-[#333]"><option>Safety Factor</option></select><svg class="pointer-events-none absolute top-[18px] right-[10px] h-[7px] w-[11px]"><use href="#caret"/></svg></div>
          <div class="flex h-[43px] items-center gap-8 bg-[#f1f1f1] pr-5 pl-[11px]">
            <button aria-label="Legend options"><svg class="h-[30px] w-[30px]" viewBox="0 0 30 30"><g stroke="#666" stroke-width="6"><path d="M15 0v30M0 15h30M4.500 4.500l21 21M25.500 4.500l-21 21"/></g><circle cx="15" cy="15" r="11" fill="#666"/><circle cx="15" cy="15" r="7.500" fill="#f1f1f1"/><circle cx="15" cy="15" r="4" fill="#666"/></svg></button>
            <button aria-label="Collapse legend"><svg class="h-[22px] w-[22px]" viewBox="0 0 22 22"><path d="M20 1v19H1z" fill="url(#tri)" stroke="#555"/><path d="M20.500 1v19.500" stroke="#111" stroke-width="2"/></svg></button>
          </div>
        </div>
        <div class="mt-[13px] flex h-[444px] w-[37px] flex-col shadow-[0_0_10px_2px_rgba(0,0,0,0.55)]">
          <div class="flex-2 bg-[#0000ff]"></div><div class="flex-3 bg-[#00ff00]"></div><div class="flex-2 bg-[#ffff00]"></div><div class="flex-1 bg-[#ff0000]"></div>
        </div>
        <div class="mt-3 flex h-[446px] w-[18px] flex-col justify-between">
          <i class="h-[2px] bg-[#555]"></i><i class="h-[2px] w-[9px] bg-[#555]"></i><i class="h-[2px] bg-[#555]"></i><i class="h-[2px] w-[9px] bg-[#555]"></i><i class="h-[2px] bg-[#555]"></i><i class="h-[2px] w-[9px] bg-[#555]"></i><i class="h-[2px] bg-[#555]"></i><i class="h-[2px] w-[9px] bg-[#555]"></i><i class="h-[2px] bg-[#555]"></i><i class="h-[2px] w-[9px] bg-[#555]"></i><i class="h-[2px] bg-[#555]"></i><i class="h-[2px] w-[9px] bg-[#555]"></i><i class="h-[2px] bg-[#555]"></i><i class="h-[2px] w-[9px] bg-[#555]"></i><i class="h-[2px] bg-[#555]"></i><i class="h-[2px] w-[9px] bg-[#555]"></i><i class="h-[3px] bg-[#555]"></i>
        </div>
        <ol class="ml-[37px] flex h-[469px] w-[63px] flex-col justify-between pt-px font-['Liberation_Sans',sans-serif] text-[22px] leading-6 font-bold"><li class="whitespace-nowrap">8.00 +</li><li>7.00</li><li>6.00</li><li>5.00</li><li>4.00</li><li>3.00</li><li>2.00</li><li>1.00</li><li>0.00</li></ol>
      </div>
      <dl class="mt-[24px] ml-[112px] grid w-[240px] grid-cols-2 font-['Liberation_Sans',sans-serif] text-[22px] leading-[25px] font-bold"><dt>Min:</dt><dd class="text-right">9.509</dd><dt>Max:</dt><dd class="text-right">15.00</dd></dl>
    </section>

    <footer class="relative mt-auto flex items-end pb-2">
      <div class="ml-[7px] flex h-[46px] w-[555px] items-center justify-between border border-r-2 border-b-2 border-[#ccc] bg-[#f1f1f1] pr-[18px] pl-[46px] text-[20px] text-[#666]"><h2>COMMENTS</h2><button aria-label="Expand comments"><svg class="h-[18px] w-[18px]" viewBox="0 0 18 18"><circle cx="9" cy="9" r="8.500" fill="#333"/><path d="M4.500 9h9M9 4.500v9" stroke="#fff" stroke-width="2"/></svg></button></div>
      <div class="absolute bottom-[11px] left-1/2 flex h-[45px] w-[382px] -translate-x-1/2 items-center bg-[#f1f1f1] px-[6px]">
        <button aria-label="Orbit" class="flex items-center gap-[9px]"><svg class="h-[30px] w-[30px]" viewBox="0 0 30 30" fill="none" stroke="#444" stroke-width="1.300"><ellipse cx="15" cy="15" rx="6" ry="13.500"/><path d="M24 10q5 2 5 5 0 6-14 6T1 15q0-5 11-6"/><path d="M15 12v6M12 15h6" stroke="#0a8cf0" stroke-width="2"/><path d="M18 4l5 1-2 4zM23 9l4-1v5z" fill="#333" stroke="none"/></svg><svg class="h-2 w-[11px]"><use href="#caret"/></svg></button>
        <button aria-label="Look at" class="ml-[13px]"><svg class="h-7 w-[26px]" viewBox="0 0 26 28" stroke="#444"><path d="M1 9L18 2v7M1 9l8-7v5" fill="#aab" /><path d="M.5 9.500h25v17H.5z" fill="#fff"/><path d="M4 14h18v8H4z" fill="#9aa4b8"/></svg></button>
        <button aria-label="Pan" class="ml-5"><svg class="h-[30px] w-[30px]" viewBox="0 0 30 30"><path d="M10 28q-1-5-5-8l-4-5q2-2 4 0l4 3L6 6q0-3 2.500-2L12 14 11 3q1-3 3 0l2 11 1-12q2-2 3 0v12l3-10q3-1 2.500 2L23 17l3-3q3-1 2 1-3 4-5 8l-2 5z" fill="#fafafa" stroke="#444" stroke-width="1.200"/></svg></button>
        <button aria-label="Zoom" class="ml-[18px]"><svg class="h-[30px] w-[30px]" viewBox="0 0 30 30"><circle cx="11" cy="11" r="9.500" fill="#e6f5f5" stroke="#666" stroke-width="1.500"/><path d="M18 18l9 9" stroke="#333" stroke-width="4"/><path d="M25 2v7M21.500 5.500h7M21.500 11h7" stroke="#333" stroke-width="1.500"/></svg></button>
        <button aria-label="Fit" class="ml-[18px] flex items-center gap-[9px]"><svg class="h-[30px] w-[30px]" viewBox="0 0 30 30"><path d="M1 1h28v28H1z" fill="none" stroke="#555" stroke-dasharray="6 2"/><circle cx="12" cy="12" r="9.500" fill="#e6f5f5" stroke="#666" stroke-width="1.500"/><path d="M19 19l9 9" stroke="#333" stroke-width="4"/></svg><svg class="h-2 w-[11px]"><use href="#caret"/></svg></button>
        <button aria-label="Display settings" class="ml-[11px] flex items-center gap-1"><svg class="h-[30px] w-[30px]" viewBox="0 0 30 30" stroke="#444"><path d="M12 22h6v4l4 1v1H8v-1l4-1z" fill="#ddd"/><path d="M1 1.500h28v21H1z" fill="#eef"/><path d="M4.500 5h21v14h-21z" fill="url(#screen)"/></svg><svg class="h-2 w-[11px]"><use href="#caret"/></svg></button>
        <button aria-label="Grid settings" class="ml-[13px] flex items-center gap-[5px]"><svg class="h-7 w-7" viewBox="0 0 28 28" stroke="#666"><path d="M1 1h26v26H1z" fill="url(#paper)"/><path d="M5.500 1v26M9.500 1v26M14 1v26M18.500 1v26M22.500 1v26M1 5.500h26M1 9.500h26M1 14h26M1 18.500h26M1 22.500h26" fill="none"/></svg><svg class="h-2 w-[11px]"><use href="#caret"/></svg></button>
      </div>
      <button aria-label="Assistant" class="absolute right-[23px] bottom-2"><svg class="h-[31px] w-[31px]" viewBox="0 0 31 31"><circle cx="15.500" cy="15.500" r="15.500" fill="#000"/><path d="M7 20l12-11v4l-6 6M14 20l6-6h3l-3 6z" fill="#fff"/></svg></button>
    </footer>
  </main>
</div>
<script>
  // Ground grid: lines meet at (vx, vy); cross lines are evenly spaced in 1/depth.
  (() => {
    const vx = 1418, vy = 1031, near = 1819, horizon = 1126;
    let minor = '', major = '';
    for (let i = -300; i <= 300; i++) {
      const s = -0.395 + 0.1314 * i;
      const line = `M${vx + s * (horizon - vy)} ${horizon}L${vx + s * (near - vy)} ${near}`;
      if (i % 5 === 0) major += line; else minor += line;
    }
    for (let i = -3; i < 290; i++) {
      const y = Math.round(vy + 1 / (0.001362 + 0.000032 * i)) + 0.5;
      if (y > near || y < horizon) continue;
      if (i % 5 === 0) major += `M0 ${y}H2800`; else minor += `M0 ${y}H2800`;
    }
    document.getElementById('minor').setAttribute('d', minor);
    document.getElementById('major').setAttribute('d', major);
  })();
</script>
</body>
</html>
